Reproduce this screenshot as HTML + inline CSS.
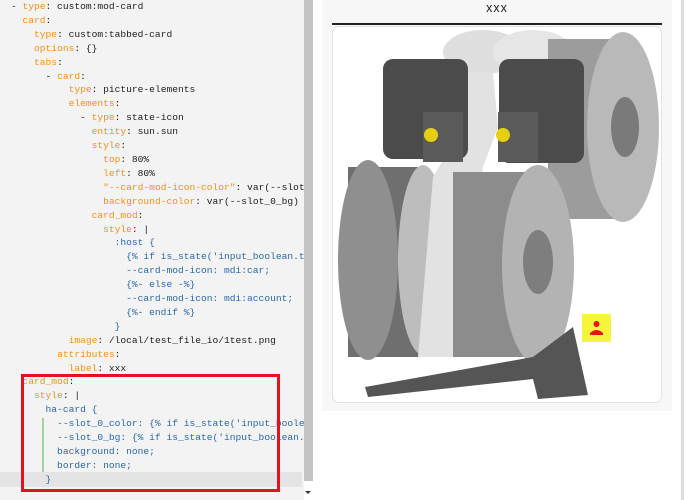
<!DOCTYPE html>
<html><head><style>
body{margin:0;width:685px;height:500px;overflow:hidden;background:#fff;font-family:"Liberation Sans",sans-serif;position:relative}
#left{position:absolute;left:0;top:0;width:304px;height:500px;background:#f3f3f3;overflow:hidden}
pre{margin:0;position:absolute;left:11px;top:0px;font-family:"Liberation Mono",monospace;font-size:9.6px;line-height:13.9px;color:#1e1e1e}
.k{color:#f0901a}.v{color:#2a68a8}
#sb{position:absolute;left:304px;top:0;width:9px;height:481px;background:#c3c3c3}
#hl{position:absolute;left:0;top:472px;width:302px;height:15px;background:#e4e4e4}
#red{position:absolute;left:21px;top:374px;width:259px;height:118px;border:3px solid #e0141f;box-sizing:border-box}
#gl{position:absolute;left:42px;top:418px;width:2px;height:54px;background:#9fd3a3}
#panel{position:absolute;left:322px;top:0;width:350px;height:411px;background:#f7f7f7}
#title{position:absolute;left:332px;top:0;width:330px;text-align:center;font-size:12.5px;letter-spacing:1px;line-height:16px;color:#222}
#ul{position:absolute;left:332px;top:23px;width:330px;height:2px;background:#222}
#card{position:absolute;left:332px;top:26px;width:330px;height:377px;background:#fff;border:1px solid #e2e2e2;border-radius:7px;box-sizing:border-box;overflow:hidden}
#rsb{position:absolute;left:681px;top:0;width:3px;height:500px;background:#ddd}
</style></head><body>
<div id="left">
<div id="hl"></div>
<pre>- <span class="k">type</span>: custom:mod-card
  <span class="k">card</span>:
    <span class="k">type</span>: custom:tabbed-card
    <span class="k">options</span>: {}
    <span class="k">tabs</span>:
      - <span class="k">card</span>:
          <span class="k">type</span>: picture-elements
          <span class="k">elements</span>:
            - <span class="k">type</span>: state-icon
              <span class="k">entity</span>: sun.sun
              <span class="k">style</span>:
                <span class="k">top</span>: 80%
                <span class="k">left</span>: 80%
                <span class="k">"--card-mod-icon-color"</span>: var(--slot_0_color)
                <span class="k">background-color</span>: var(--slot_0_bg)
              <span class="k">card_mod</span>:
                <span class="k">style</span>: |
<span class="v">                  :host {
                    {% if is_state('input_boolean.test','on') %}
                    --card-mod-icon: mdi:car;
                    {%- else -%}
                    --card-mod-icon: mdi:account;
                    {%- endif %}
                  }</span>
          <span class="k">image</span>: /local/test_file_io/1test.png
        <span class="k">attributes</span>:
          <span class="k">label</span>: xxx
  <span class="k">card_mod</span>:
    <span class="k">style</span>: |
<span class="v">      ha-card {
        --slot_0_color: {% if is_state('input_boolean.test','on') %}
        --slot_0_bg: {% if is_state('input_boolean.test','on') %}
        background: none;
        border: none;
      }</span></pre>
<div id="gl"></div>
<div id="red"></div>
</div>
<div id="sb"></div>
<div style="position:absolute;left:305px;top:491px;width:0;height:0;border-left:3px solid transparent;border-right:3px solid transparent;border-top:3px solid #333"></div>
<div id="panel"></div>
<div id="title">xxx</div>
<div id="ul"></div>
<div id="card">
<svg width="330" height="377" viewBox="0 0 330 377">
<ellipse cx="150" cy="25" rx="40" ry="22" fill="#dedede"/>
<ellipse cx="200" cy="25" rx="40" ry="22" fill="#e6e6e6"/>
<rect x="215" y="12" width="75" height="180" fill="#9c9c9c"/>
<ellipse cx="290" cy="100" rx="36" ry="95" fill="#b9b9b9"/>
<ellipse cx="292" cy="100" rx="14" ry="30" fill="#7a7a7a"/>
<rect x="15" y="140" width="80" height="190" fill="#6f6f6f"/>
<ellipse cx="35" cy="233" rx="30" ry="100" fill="#8f8f8f"/>
<ellipse cx="90" cy="233" rx="25" ry="95" fill="#bdbdbd"/>
<path d="M130 45 L160 45 L165 100 L150 140 L120 330 L85 330 L100 150 L130 100 Z" fill="#e2e2e2"/>
<rect x="120" y="145" width="85" height="185" fill="#8c8c8c"/>
<ellipse cx="205" cy="238" rx="36" ry="100" fill="#b3b3b3"/>
<ellipse cx="205" cy="235" rx="15" ry="32" fill="#7e7e7e"/>
<rect x="50" y="32" width="85" height="100" rx="10" fill="#4b4b4b"/>
<rect x="166" y="32" width="85" height="104" rx="10" fill="#4b4b4b"/>
<rect x="90" y="85" width="40" height="50" fill="#5a5a5a"/>
<rect x="165" y="85" width="40" height="50" fill="#5a5a5a"/>
<circle cx="98" cy="108" r="7" fill="#e6cf12"/>
<circle cx="170" cy="108" r="7" fill="#e6cf12"/>
<path d="M32 360 L200 330 L240 300 L255 368 L205 372 L200 352 L35 370 Z" fill="#555"/>
<rect x="249" y="287" width="29" height="28" fill="#f5f53c"/>
<circle cx="263.5" cy="297" r="3" fill="#e8101c"/>
<path d="M257 306 Q263.5 300 270 306 L270 308 L257 308 Z" fill="#e8101c"/>
</svg>
</div>
<div id="rsb"></div>
</body></html>
